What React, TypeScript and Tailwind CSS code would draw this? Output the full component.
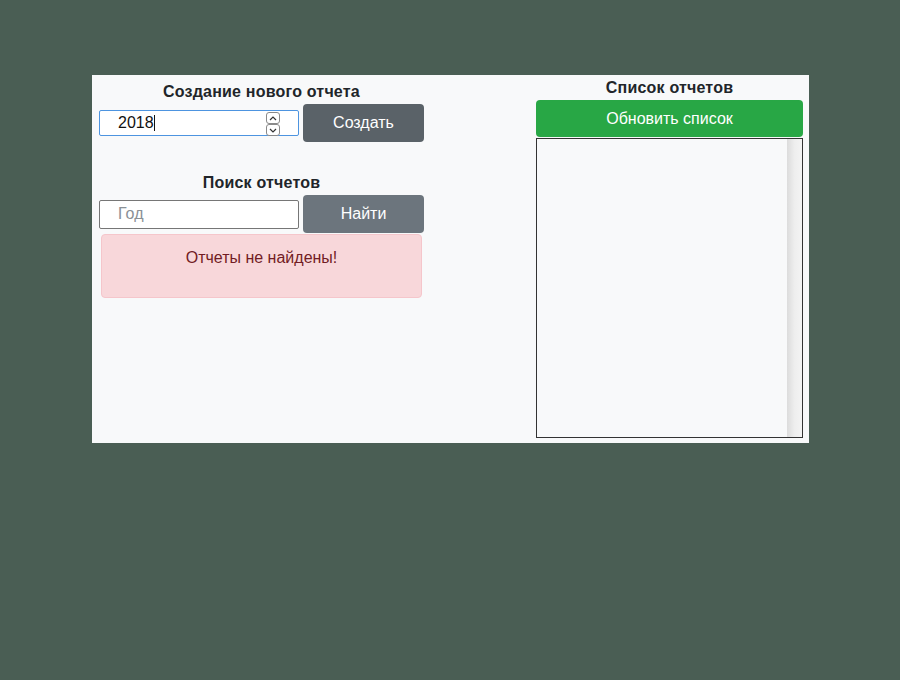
const font = { fontFamily: '"Liberation Sans", Arial, sans-serif' };

const Spinner = () => (
	<div className="flex flex-col absolute right-[18px] top-[1px]">
		<div className="w-[14px] h-[12px] border border-[#8a8a8a] rounded-[3px] flex items-center justify-center bg-white">
			<svg width="8" height="5" viewBox="0 0 8 5"><path d="M1 4 L4 1 L7 4" fill="none" stroke="#333" strokeWidth="1.2" /></svg>
		</div>
		<div className="w-[14px] h-[12px] border border-[#8a8a8a] rounded-[3px] flex items-center justify-center bg-white">
			<svg width="8" height="5" viewBox="0 0 8 5"><path d="M1 1 L4 4 L7 1" fill="none" stroke="#333" strokeWidth="1.2" /></svg>
		</div>
	</div>
);

const App = () => {
	return (
		<div className="bg-[#4a5e54] w-[900px] h-[680px] pt-[75px] pl-[92px]" style={font}>
			<div className="bg-[#f8f9fa] w-[717px] h-[368px] flex justify-between pl-[7px] pr-[6px]">
				{/* left column */}
				<div className="w-[325px] flex flex-col pt-[5px]">
					<h2 className="text-[16px] leading-[24px] font-bold tracking-[0.2px] text-[#212529] text-center">Создание нового отчета</h2>
					<div className="flex items-center gap-[4px]">
						<div className="relative w-[200px] h-[26px] border border-[#4d94e0] rounded-[2px] bg-white flex items-center pl-[18px]">
							<span className="text-[16px] text-[#111]">2018</span>
							<span className="w-[1px] h-[16px] bg-[#111]" />
							<Spinner />
						</div>
						<button className="w-[121px] h-[38px] bg-[#5a6268] text-white text-[16px] rounded-[4px]">Создать</button>
					</div>
					<h2 className="text-[16px] leading-[24px] font-bold tracking-[0.2px] text-[#212529] text-center mt-[29px]">Поиск отчетов</h2>
					<div className="flex items-center gap-[4px]">
						<div className="w-[200px] h-[29px] border border-[#767676] rounded-[2px] bg-white flex items-center pl-[18px]">
							<span className="text-[16px] text-[#8a9096]">Год</span>
						</div>
						<button className="w-[121px] h-[38px] bg-[#6c757d] text-white text-[16px] rounded-[4px]">Найти</button>
					</div>
					<div className="mx-[2px] mt-[1px] h-[64px] bg-[#f8d7da] border border-[#f5c6cb] rounded-[4px] text-[#721c24] text-[16px] leading-[24px] text-center pt-[11px]">
						Отчеты не найдены!
					</div>
				</div>
				{/* right column */}
				<div className="w-[267px] flex flex-col pt-[1px]">
					<h2 className="text-[16px] leading-[24px] font-bold tracking-[0.2px] text-[#212529] text-center">Список отчетов</h2>
					<button className="h-[37px] bg-[#28a745] text-white text-[16px] rounded-[4px]">Обновить список</button>
					<div className="mt-[1px] h-[300px] border border-[#333] bg-[#f8f9fa] flex justify-end">
						<div className="w-[15px] h-full bg-gradient-to-r from-[#dcdcdc] via-[#eeeeee] to-[#f4f4f4]" />
					</div>
				</div>
			</div>
		</div>
	);
};

export default App;
